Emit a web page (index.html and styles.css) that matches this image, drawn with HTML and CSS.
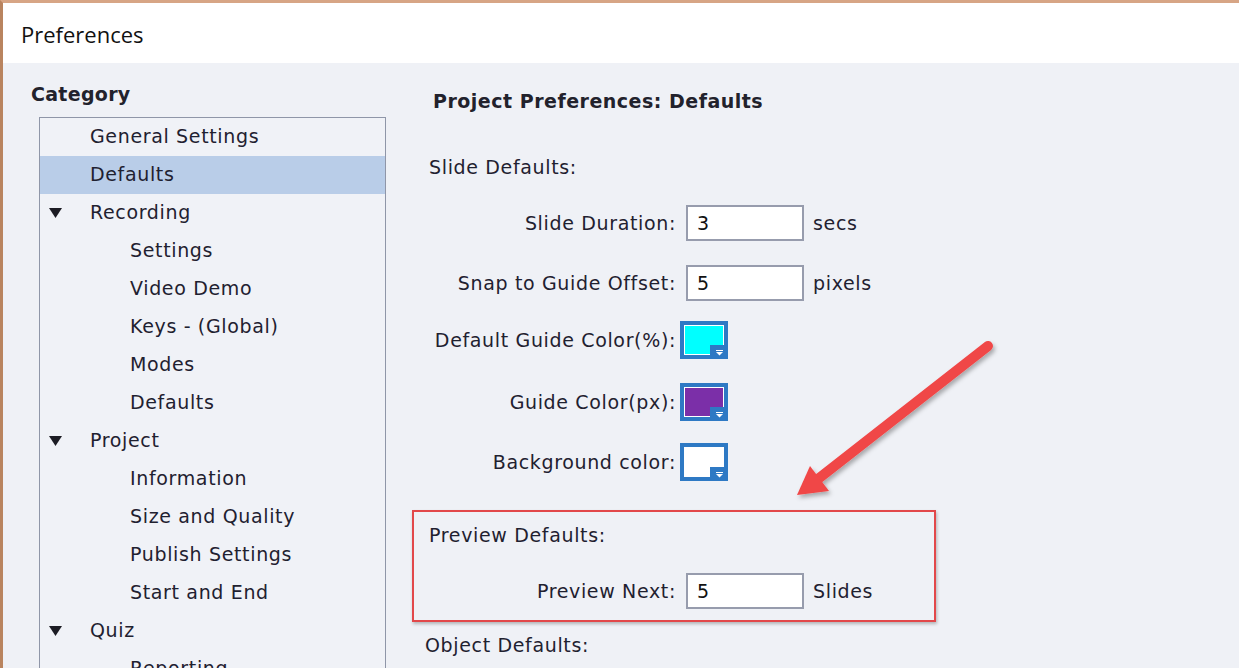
FILE: index.html
```html
<!DOCTYPE html>
<html>
<head>
<meta charset="utf-8">
<link rel="stylesheet" href="styles.css">
</head>
<body>
<div class="screen">
  <div class="window">
    <div class="titlebar">Preferences</div>
    <div class="content">
      <aside class="category">
        <h2 class="cat-title">Category</h2>
        <ul class="tree">
          <li class="item l1">General Settings</li>
          <li class="item l1 selected">Defaults</li>
          <li class="item l1"><svg class="tri" width="13" height="10" viewBox="0 0 13 10"><polygon points="0,0 13,0 6.5,10" fill="#1c1c24"/></svg>Recording</li>
          <li class="item l2">Settings</li>
          <li class="item l2">Video Demo</li>
          <li class="item l2">Keys - (Global)</li>
          <li class="item l2">Modes</li>
          <li class="item l2">Defaults</li>
          <li class="item l1"><svg class="tri" width="13" height="10" viewBox="0 0 13 10"><polygon points="0,0 13,0 6.5,10" fill="#1c1c24"/></svg>Project</li>
          <li class="item l2">Information</li>
          <li class="item l2">Size and Quality</li>
          <li class="item l2">Publish Settings</li>
          <li class="item l2">Start and End</li>
          <li class="item l1"><svg class="tri" width="13" height="10" viewBox="0 0 13 10"><polygon points="0,0 13,0 6.5,10" fill="#1c1c24"/></svg>Quiz</li>
          <li class="item l2">Reporting</li>
        </ul>
      </aside>
      <main class="panel">
        <h1 class="panel-title">Project Preferences: Defaults</h1>
        <div class="section-label slide-label">Slide Defaults:</div>
        <div class="row r-duration">
          <span class="label">Slide Duration:</span>
          <span class="input">3</span>
          <span class="unit">secs</span>
        </div>
        <div class="row r-snap">
          <span class="label">Snap to Guide Offset:</span>
          <span class="input">5</span>
          <span class="unit">pixels</span>
        </div>
        <div class="row r-guide">
          <span class="label">Default Guide Color(%):</span>
          <span class="swatch"><span class="fill cyan"></span><svg class="drop" width="18" height="14" viewBox="0 0 18 14"><rect width="18" height="14" fill="#2e79c4"/><rect x="6" y="5" width="7" height="1" fill="#fff"/><polygon points="6,7 13,7 9.5,10.5" fill="#fff"/></svg></span>
        </div>
        <div class="row r-guidepx">
          <span class="label">Guide Color(px):</span>
          <span class="swatch"><span class="fill purple"></span><svg class="drop" width="18" height="14" viewBox="0 0 18 14"><rect width="18" height="14" fill="#2e79c4"/><rect x="6" y="5" width="7" height="1" fill="#fff"/><polygon points="6,7 13,7 9.5,10.5" fill="#fff"/></svg></span>
        </div>
        <div class="row r-bg">
          <span class="label">Background color:</span>
          <span class="swatch"><span class="fill white"></span><svg class="drop" width="18" height="14" viewBox="0 0 18 14"><rect width="18" height="14" fill="#2e79c4"/><rect x="6" y="5" width="7" height="1" fill="#fff"/><polygon points="6,7 13,7 9.5,10.5" fill="#fff"/></svg></span>
        </div>
        <div class="highlight">
          <div class="section-label preview-label">Preview Defaults:</div>
          <div class="row r-preview">
            <span class="label">Preview Next:</span>
            <span class="input">5</span>
            <span class="unit">Slides</span>
          </div>
        </div>
        <div class="section-label object-label">Object Defaults:</div>
      </main>
    </div>
  </div>
  <svg class="arrow" width="1239" height="668" viewBox="0 0 1239 668">
    <defs>
      <filter id="sh" x="-20%" y="-20%" width="140%" height="140%">
        <feDropShadow dx="2" dy="3" stdDeviation="2" flood-color="#000" flood-opacity="0.3"/>
      </filter>
    </defs>
    <g filter="url(#sh)">
      <line x1="988" y1="346" x2="818" y2="479" stroke="#f04646" stroke-width="10" stroke-linecap="round"/>
      <polygon points="797,495 810,466 829,491" fill="#f04646"/>
    </g>
  </svg>
</div>
</body>
</html>
```
FILE: styles.css
```css
* { box-sizing: border-box; }
html, body { margin: 0; padding: 0; }
body {
  width: 1239px;
  height: 668px;
  overflow: hidden;
  background: #2a3350;
}
.screen {
  position: relative;
  width: 1239px;
  height: 668px;
  display: flex;
  flex-direction: column;
}
.window {
  flex: 1;
  display: flex;
  flex-direction: column;
  border-top: 3px solid #d7a585;
  border-left: 3px solid #b9845f;
  background: #eff1f6;
}
.titlebar {
  height: 60px;
  background: #ffffff;
  padding-left: 18px;
  display: flex;
  align-items: center;
  font-family: "Open Sans", "Noto Sans", sans-serif;
  font-size: 22px;
  color: #111;
  padding-top: 2px;
}
.content {
  flex: 1;
  display: flex;
  font-family: "DejaVu Sans", "Liberation Sans", sans-serif;
  color: #1f2130;
  font-size: 19px;
  letter-spacing: 0.65px;
}
.category {
  flex: 0 0 409px;
  padding-left: 28px;
  display: flex;
  flex-direction: column;
}
.cat-title {
  margin: 19px 0 0 0;
  font-size: 19px;
  line-height: 24px;
  font-weight: bold;
  color: #22222c;
  letter-spacing: 0.3px;
}
.tree {
  list-style: none;
  margin: 11px 0 0 8px;
  padding: 0;
  width: 347px;
  flex: 1;
  border: 1px solid #8f96a8;
  border-bottom: none;
  background: #f0f2f7;
}
.item {
  height: 38px;
  display: flex;
  align-items: center;
  position: relative;
  white-space: nowrap;
  padding-bottom: 3px;
}
.item.l1 { padding-left: 50px; }
.item.l2 { padding-left: 90px; }
.item.selected { background: #b9cde8; }
.tri {
  position: absolute;
  left: 9px;
  top: 14px;
}
.panel {
  flex: 0 0 524px;
  display: flex;
  flex-direction: column;
}
.panel-title {
  margin: 26px 0 0 21px;
  font-size: 19px;
  line-height: 24px;
  font-weight: bold;
  color: #22222c;
  letter-spacing: 0.5px;
}
.section-label {
  line-height: 24px;
}
.slide-label { margin: 42px 0 0 17px; }
.row {
  display: flex;
  align-items: center;
}
.label {
  flex: 0 0 264px;
  text-align: right;
  white-space: nowrap;
}
.input {
  width: 118px;
  height: 36px;
  margin-left: 10px;
  background: #fff;
  border: 2px solid #979cad;
  display: flex;
  align-items: center;
  padding-left: 9px;
  color: #111;
}
.unit { margin-left: 9px; }
.r-duration { margin-top: 26px; }
.r-snap { margin-top: 24px; }
.r-guide { margin-top: 20px; }
.r-guidepx { margin-top: 24px; }
.r-bg { margin-top: 22px; }
.swatch {
  position: relative;
  width: 48px;
  height: 38px;
  margin-left: 4px;
  background: #2e79c4;
  padding: 4px;
  display: flex;
}
.fill {
  flex: 1;
  border: 1px solid #fff;
}
.fill.cyan { background: #00ffff; }
.fill.purple { background: #7b2fa8; }
.fill.white { background: #ffffff; }
.drop {
  position: absolute;
  right: 0;
  bottom: 0;
}
.highlight {
  margin-top: 29px;
  height: 112px;
  border: 2px solid #e2484a;
  box-shadow: 1px 2px 3px rgba(0,0,0,0.25);
  padding-top: 11px;
}
.preview-label { margin-left: 15px; }
.r-preview { margin-top: 26px; }
.r-preview .label { flex-basis: 262px; }
.object-label { margin: 11px 0 0 13px; }
.arrow {
  position: absolute;
  left: 0;
  top: 0;
  pointer-events: none;
}
```
